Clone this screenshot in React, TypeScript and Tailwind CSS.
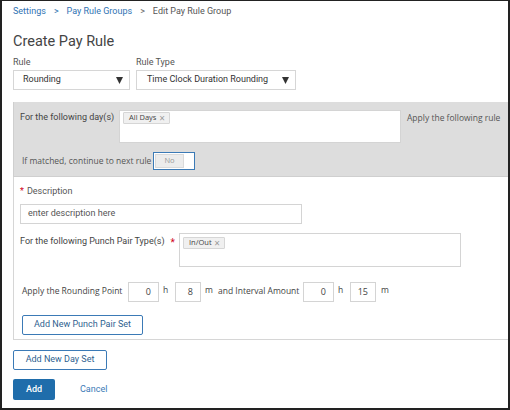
import React from "react";

const roboto = { fontFamily: "Roboto, 'Liberation Sans', sans-serif" };
const open = { fontFamily: "'Open Sans', 'Liberation Sans', sans-serif" };

function Caret() {
  return (
    <svg width="7" height="7" viewBox="0 0 7 7" className="shrink-0">
      <path d="M0 0 H7 L3.5 7 Z" fill="#333" />
    </svg>
  );
}

function Chip({ label, w }: { label: string; w: string }) {
  return (
    <div
      className={`${w} flex items-center justify-between h-[12px] pl-[5px] pr-[4px] bg-[#f0f0f0] border border-[#d6d6d6] rounded-[1px] text-[7.5px] text-[#444] leading-none`}
      style={open}
    >
      <span>{label}</span>
      <span className="text-[#999] text-[10px] leading-none">×</span>
    </div>
  );
}

function NumBox({ value, w }: { value: string; w: string }) {
  return (
    <div
      className={`${w} h-[20px] border border-[#d4d4d4] flex items-center justify-end pr-[7px] text-[9px] text-[#444]`}
      style={open}
    >
      {value}
    </div>
  );
}

export default function App() {
  return (
    <div
      className="w-[510px] h-[410px] bg-white border-t border-l-2 border-r-2 border-b-2 border-[#222] pl-[11px] flex flex-col text-[#444] overflow-hidden"
      style={roboto}
    >
      {/* breadcrumb */}
      <div className="mt-[4px] h-[12px] flex items-center text-[9px] leading-none gap-[8px]">
        <span className="text-[#2f73b3]">Settings</span>
        <span className="text-[#2f73b3]">&gt;</span>
        <span className="text-[#2f73b3]">Pay Rule Groups</span>
        <span className="text-[#666]">&gt;</span>
        <span className="text-[#555]">Edit Pay Rule Group</span>
      </div>

      {/* title */}
      <div className="mt-[16px] h-[18px] flex items-center text-[14.5px] text-[#444] leading-none">
        Create Pay Rule
      </div>

      {/* rule selects */}
      <div className="mt-[6px] flex gap-[6px]">
        <div className="flex flex-col w-[117px]">
          <div className="h-[12px] flex items-center text-[9px] text-[#555]">Rule</div>
          <div className="mt-[1px] h-[20px] border border-[#d6d6d6] flex items-center justify-between pl-[9px] pr-[6px] text-[9px] text-[#333]">
            <span>Rounding</span>
            <Caret />
          </div>
        </div>
        <div className="flex flex-col w-[160px]">
          <div className="h-[12px] flex items-center text-[9px] text-[#555]">Rule Type</div>
          <div className="mt-[1px] h-[20px] border border-[#d6d6d6] flex items-center justify-between pl-[10px] pr-[6px] text-[9px] text-[#333]">
            <span>Time Clock Duration Rounding</span>
            <Caret />
          </div>
        </div>
      </div>

      {/* gray day panel */}
      <div className="mt-[12px] h-[75px] bg-[#dddddd] border-l border-b border-[#cfcfcf] pl-[6px] pt-[8px] flex flex-col">
        <div className="flex items-start">
          <div className="w-[99px] mt-[2px] h-[12px] flex items-center text-[9px] text-[#444]">
            For the following day(s)
          </div>
          <div className="w-[282px] h-[33px] bg-white border border-[#d4d4d4] pt-[1px] pl-[3px]">
            <Chip label="All Days" w="w-[47px]" />
          </div>
          <div className="ml-[6px] mt-[2px] h-[12px] flex items-center text-[8.5px] text-[#555]" style={open}>
            Apply the following rule
          </div>
        </div>
        <div className="mt-[9px] flex items-center pl-[2px]">
          <div className="w-[131px] text-[8.5px] text-[#555]" style={open}>
            If matched, continue to next rule
          </div>
          <div className="w-[42px] h-[18px] border border-[#3b7ab6] bg-white flex p-[1px]">
            <div
              className="w-[29px] h-full bg-[#ececec] border border-[#dadada] flex items-center justify-center text-[7.5px] text-[#999]"
              style={open}
            >
              No
            </div>
          </div>
        </div>
      </div>

      {/* white rule section */}
      <div className="border-l border-b border-[#d6d6d6] flex flex-col pl-[6px] pt-[9px] pb-[4px]">
        <div className="h-[12px] flex items-center text-[9px] text-[#555] gap-[3px]">
          <span className="text-[#d0021b]">*</span>
          <span>Description</span>
        </div>
        <div className="mt-[6px] w-[282px] h-[20px] border border-[#d4d4d4] flex items-center pl-[7px] text-[9px] text-[#555]">
          enter description here
        </div>

        <div className="mt-[9px] flex items-start">
          <div className="w-[159px] mt-[3px] h-[12px] flex items-center text-[9px] text-[#444]">
            For the following Punch Pair Type(s)
            <span className="ml-[6px] text-[#d0021b] text-[10px]">*</span>
          </div>
          <div className="w-[282px] h-[34px] border border-[#d4d4d4] pt-[3px] pl-[3px]">
            <Chip label="In/Out" w="w-[42px]" />
          </div>
        </div>

        <div className="mt-[15px] flex items-start pl-[2px] text-[8.5px] text-[#444]" style={open}>
          <div className="w-[106px] h-[18px] flex items-center">Apply the Rounding Point</div>
          <NumBox value="0" w="w-[31px]" />
          <div className="w-[16px] pl-[4px] leading-[15px]">h</div>
          <NumBox value="8" w="w-[26px]" />
          <div className="w-[17px] pl-[4px] leading-[15px]">m</div>
          <div className="w-[85px] h-[18px] flex items-center">and Interval Amount</div>
          <NumBox value="0" w="w-[31px]" />
          <div className="w-[16px] pl-[4px] leading-[15px]">h</div>
          <NumBox value="15" w="w-[26px]" />
          <div className="pl-[5px] leading-[15px]">m</div>
        </div>

        <div className="mt-[13px] ml-[2px] w-[121px] h-[20px] border border-[#3b7ab6] rounded-[2px] flex items-center justify-center text-[9px] text-[#2f5f8f]">
          Add New Punch Pair Set
        </div>
      </div>

      <div className="mt-[10px] w-[94px] h-[20px] border border-[#3b7ab6] rounded-[2px] flex items-center justify-center text-[9px] text-[#2f5f8f]">
        Add New Day Set
      </div>

      <div className="mt-[9px] flex items-center">
        <div className="w-[42px] h-[21px] bg-[#1f6dab] rounded-[2px] flex items-center justify-center text-[9px] text-white font-medium">
          Add
        </div>
        <div className="ml-[25px] text-[9px] text-[#3b7ab6]">Cancel</div>
      </div>
    </div>
  );
}
